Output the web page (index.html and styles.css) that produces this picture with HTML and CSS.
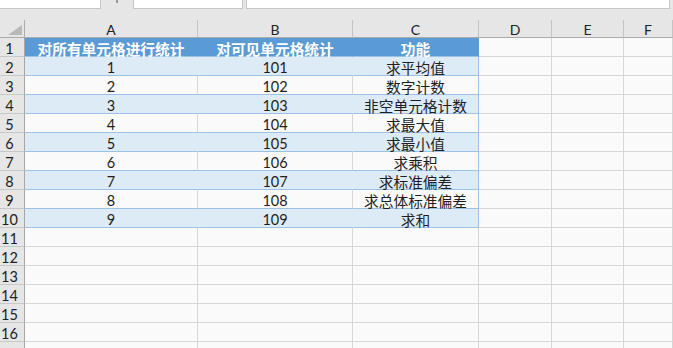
FILE: index.html
```html
<!DOCTYPE html>
<html>
<head>
<meta charset="utf-8">
<link rel="stylesheet" href="styles.css">
</head>
<body>
<div class="app">
  <div class="bar">
    <div class="namebox"></div>
    <div class="mark"></div>
    <div class="fxbox"><span class="dot"></span><span class="dot"></span><span class="dot"></span></div>
    <div class="formula"></div>
  </div>
  <div class="sheet">
    <div class="corner"><svg width="14" height="10" viewBox="0 0 14 10"><polygon points="14,0 14,10 0,10" fill="#b9b9b9"/></svg></div>
    <div class="ch">A</div><div class="ch">B</div><div class="ch">C</div><div class="ch">D</div><div class="ch">E</div><div class="ch">F</div>

    <div class="rh">1</div><div class="c hd zh">对所有单元格进行统计</div><div class="c hd zh">对可见单元格统计</div><div class="c hd zh">功能</div><div class="c"></div><div class="c"></div><div class="c"></div>
    <div class="rh">2</div><div class="c band">1</div><div class="c band">101</div><div class="c band end zh">求平均值</div><div class="c"></div><div class="c"></div><div class="c"></div>
    <div class="rh">3</div><div class="c wt">2</div><div class="c wt">102</div><div class="c wt end zh">数字计数</div><div class="c"></div><div class="c"></div><div class="c"></div>
    <div class="rh">4</div><div class="c band">3</div><div class="c band">103</div><div class="c band end zh">非空单元格计数</div><div class="c"></div><div class="c"></div><div class="c"></div>
    <div class="rh">5</div><div class="c wt">4</div><div class="c wt">104</div><div class="c wt end zh">求最大值</div><div class="c"></div><div class="c"></div><div class="c"></div>
    <div class="rh">6</div><div class="c band">5</div><div class="c band">105</div><div class="c band end zh">求最小值</div><div class="c"></div><div class="c"></div><div class="c"></div>
    <div class="rh">7</div><div class="c wt">6</div><div class="c wt">106</div><div class="c wt end zh">求乘积</div><div class="c"></div><div class="c"></div><div class="c"></div>
    <div class="rh">8</div><div class="c band">7</div><div class="c band">107</div><div class="c band end zh">求标准偏差</div><div class="c"></div><div class="c"></div><div class="c"></div>
    <div class="rh">9</div><div class="c wt">8</div><div class="c wt">108</div><div class="c wt end zh">求总体标准偏差</div><div class="c"></div><div class="c"></div><div class="c"></div>
    <div class="rh">10</div><div class="c band">9</div><div class="c band">109</div><div class="c band end zh">求和</div><div class="c"></div><div class="c"></div><div class="c"></div>
    <div class="rh">11</div><div class="c"></div><div class="c"></div><div class="c"></div><div class="c"></div><div class="c"></div><div class="c"></div>
    <div class="rh">12</div><div class="c"></div><div class="c"></div><div class="c"></div><div class="c"></div><div class="c"></div><div class="c"></div>
    <div class="rh">13</div><div class="c"></div><div class="c"></div><div class="c"></div><div class="c"></div><div class="c"></div><div class="c"></div>
    <div class="rh">14</div><div class="c"></div><div class="c"></div><div class="c"></div><div class="c"></div><div class="c"></div><div class="c"></div>
    <div class="rh">15</div><div class="c"></div><div class="c"></div><div class="c"></div><div class="c"></div><div class="c"></div><div class="c"></div>
    <div class="rh">16</div><div class="c"></div><div class="c"></div><div class="c"></div><div class="c"></div><div class="c"></div><div class="c"></div>
    <div class="rh"></div><div class="c"></div><div class="c"></div><div class="c"></div><div class="c"></div><div class="c"></div><div class="c"></div>
  </div>
</div>
</body>
</html>
```
FILE: styles.css
```css
html, body {
  margin: 0;
  padding: 0;
  background: #fafafa;
  overflow: hidden;
}
.app {
  width: 673px;
  height: 348px;
  overflow: hidden;
  font-family: "Lato", "Noto Sans CJK SC", sans-serif;
  color: #1e1e1e;
}
.bar {
  display: flex;
  align-items: flex-start;
  height: 20px;
  background: #e6e6e6;
}
.namebox {
  width: 101px;
  height: 9px;
  box-sizing: border-box;
  background: #fff;
  border-right: 1px solid #c6c6c6;
  border-bottom: 1px solid #c6c6c6;
}
.mark {
  width: 2px;
  height: 3px;
  margin-left: 15px;
  background: #9a9a9a;
}
.fxbox {
  width: 110px;
  height: 9px;
  margin-left: 15px;
  box-sizing: border-box;
  background: #fff;
  border: 1px solid #c6c6c6;
  border-top: none;
  display: flex;
  padding-left: 13px;
}
.dot {
  width: 2px;
  height: 2px;
  background: #bbbbbb;
  margin-right: 38px;
}
.dot:nth-child(2) { margin-right: 30px; }
.dot:nth-child(3) { background: #888; }
.formula {
  width: 424px;
  height: 9px;
  margin-left: 3px;
  box-sizing: border-box;
  background: #fff;
  border: 1px solid #c6c6c6;
  border-top: none;
}
.sheet {
  display: grid;
  grid-template-columns: 25px 173px 155px 126px 73px 72px 49px;
  grid-template-rows: 18px;
  grid-auto-rows: 19px;
}
.corner {
  background: #e6e6e6;
  border-bottom: 1px solid #ababab;
  border-right: 1px solid #ababab;
  box-sizing: border-box;
  display: flex;
  justify-content: flex-end;
  align-items: flex-end;
  padding: 0 2px 2px 0;
}
.corner svg { display: block; }
.ch {
  background: #e6e6e6;
  border-right: 1px solid #c4c4c4;
  border-bottom: 1px solid #ababab;
  box-sizing: border-box;
  text-align: center;
  font-size: 14px;
  line-height: 19px;
  color: #222;
}
.rh {
  background: #e6e6e6;
  border-right: 1px solid #a6a6a6;
  border-bottom: 1px solid #c8c8c8;
  box-sizing: border-box;
  text-align: center;
  padding-right: 5px;
  font-size: 14.5px;
  line-height: 21px;
  color: #222;
  overflow: hidden;
}
.c {
  background: #fafafa;
  border-right: 1px solid #d6d6d6;
  border-bottom: 1px solid #d6d6d6;
  box-sizing: border-box;
  text-align: center;
  font-size: 14.5px;
  line-height: 21px;
  white-space: nowrap;
  overflow: visible;
  color: #1e1e1e;
}
.zh {
  font-family: "Noto Sans CJK SC", sans-serif;
  font-size: 14.7px;
}
.hd {
  background: #5b9bd5;
  color: #fff;
  font-weight: 700;
  border-right-color: #5b9bd5;
  border-bottom-color: #9bc2e6;
}
.band {
  background: #ddebf7;
  border-right-color: #ddebf7;
  border-bottom-color: #9bc2e6;
}
.wt {
  border-bottom-color: #9bc2e6;
}
.end {
  border-right-color: #9bc2e6;
}
```
